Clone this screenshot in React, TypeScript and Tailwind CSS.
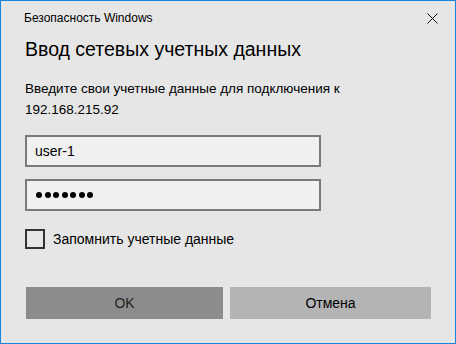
export default function App() {
  const font = { fontFamily: '"Segoe UI", "Liberation Sans", Arial, sans-serif' }
  return (
    <div
      className="w-[456px] h-[344px] border border-[#1883d7] bg-[#e6e6e6] flex flex-col text-black"
      style={font}
    >
      {/* title bar */}
      <div className="h-[34px] flex items-center justify-between pl-[23px] pr-[16px]">
        <span className="text-[12px]">Безопасность Windows</span>
        <svg width="11" height="11" viewBox="0 0 11 11" className="mr-[1px]">
          <path d="M0.5 0.5 L10.5 10.5 M10.5 0.5 L0.5 10.5" stroke="#111" strokeWidth="1" fill="none" />
        </svg>
      </div>

      <div className="px-[24px] flex flex-col">
        <h1 className="mt-[2px] text-[19.5px] leading-[24px] font-normal">Ввод сетевых учетных данных</h1>

        <p className="mt-[17px] text-[13.5px] leading-[21px]">
          Введите свои учетные данные для подключения к
          <br />
          192.168.215.92
        </p>

        <div className="mt-[15px] w-[296px] h-[32px] border-2 border-[#7a7a7a] bg-[#f0f0f0] flex items-center px-[8px] text-[14px]">
          user-1
        </div>
        <div className="mt-[12px] w-[296px] h-[32px] border-2 border-[#7a7a7a] bg-[#f0f0f0] flex items-center gap-[2.5px] px-[9px]">
          {Array.from({ length: 7 }).map((_, i) => (
            <span key={i} className="w-[6px] h-[6px] rounded-full bg-black" />
          ))}
        </div>

        <label className="mt-[18px] h-[20px] flex items-center gap-[8px] text-[14px]">
          <span className="w-[20px] h-[20px] border-2 border-[#333333] shrink-0" />
          Запомнить учетные данные
        </label>

        <div className="mt-[38px] ml-[1px] flex gap-[7px]">
          <button className="w-[197px] h-[32px] bg-[#8c8c8c] text-[14px] text-[#222222]">OK</button>
          <button className="w-[201px] h-[32px] bg-[#b4b4b4] text-[14px] text-black">Отмена</button>
        </div>
      </div>
    </div>
  )
}
